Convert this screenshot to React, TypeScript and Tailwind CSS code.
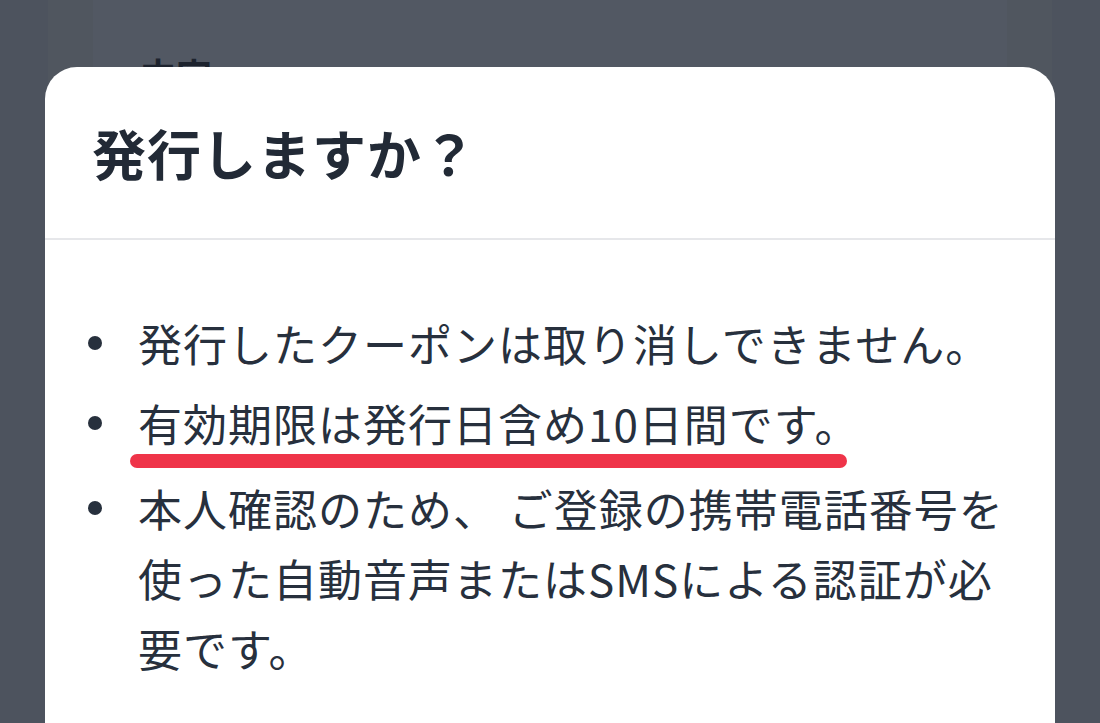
import React from 'react';

const font = { fontFamily: '"Noto Sans CJK JP", "Noto Sans", sans-serif' };

const Bullet: React.FC = () => (
    <div className="flex h-[70px] w-[14px] shrink-0 items-center">
        <span className="block h-[14px] w-[14px] rounded-full bg-[#27303d]"></span>
    </div>
);

const App: React.FC = () => {
    return (
        <div className="relative h-[723px] w-[1100px] overflow-hidden bg-[#4d535e]" style={font}>
            {/* page behind the dialog */}
            <div className="mx-[48px] h-full bg-[#50565f] px-[45px]">
                <div className="h-full bg-[#525863] px-[47px] pt-[52px]">
                    <p className="text-[36px] font-bold leading-[44px] text-[#1d232e]">内容</p>
                </div>
            </div>

            {/* dialog */}
            <div className="absolute left-[45px] top-[67px] h-[700px] w-[1010px] rounded-t-[32px] bg-white">
                <div className="flex h-[173px] items-center border-b-2 border-[#e6e7ea] pl-[47px]">
                    <h2 className="text-[54px] font-bold leading-none tracking-[1px] text-[#222a36]">発行しますか？</h2>
                </div>
                <ul className="pl-[43px] pt-[68px] text-[44px] leading-[70px] tracking-[1px] text-[#27303d]">
                    <li className="flex gap-[36px]">
                        <Bullet />
                        <p className="w-[880px]">発行したクーポンは取り消しできません。</p>
                    </li>
                    <li className="mt-[10px] flex gap-[36px]">
                        <Bullet />
                        <p className="w-[880px]">
                            <span className="relative inline-block">
                                有効期限は発行日含め10日間です。
                                <span className="absolute -left-[8px] right-[12px] top-[66px] h-[14px] rounded-full bg-[#ef3449]"></span>
                            </span>
                        </p>
                    </li>
                    <li className="mt-[15px] flex gap-[36px]">
                        <Bullet />
                        <p className="w-[880px]">本人確認のため、 ご登録の携帯電話番号を使った自動音声またはSMSによる認証が必要です。</p>
                    </li>
                </ul>
            </div>
        </div>
    );
};

export default App;
